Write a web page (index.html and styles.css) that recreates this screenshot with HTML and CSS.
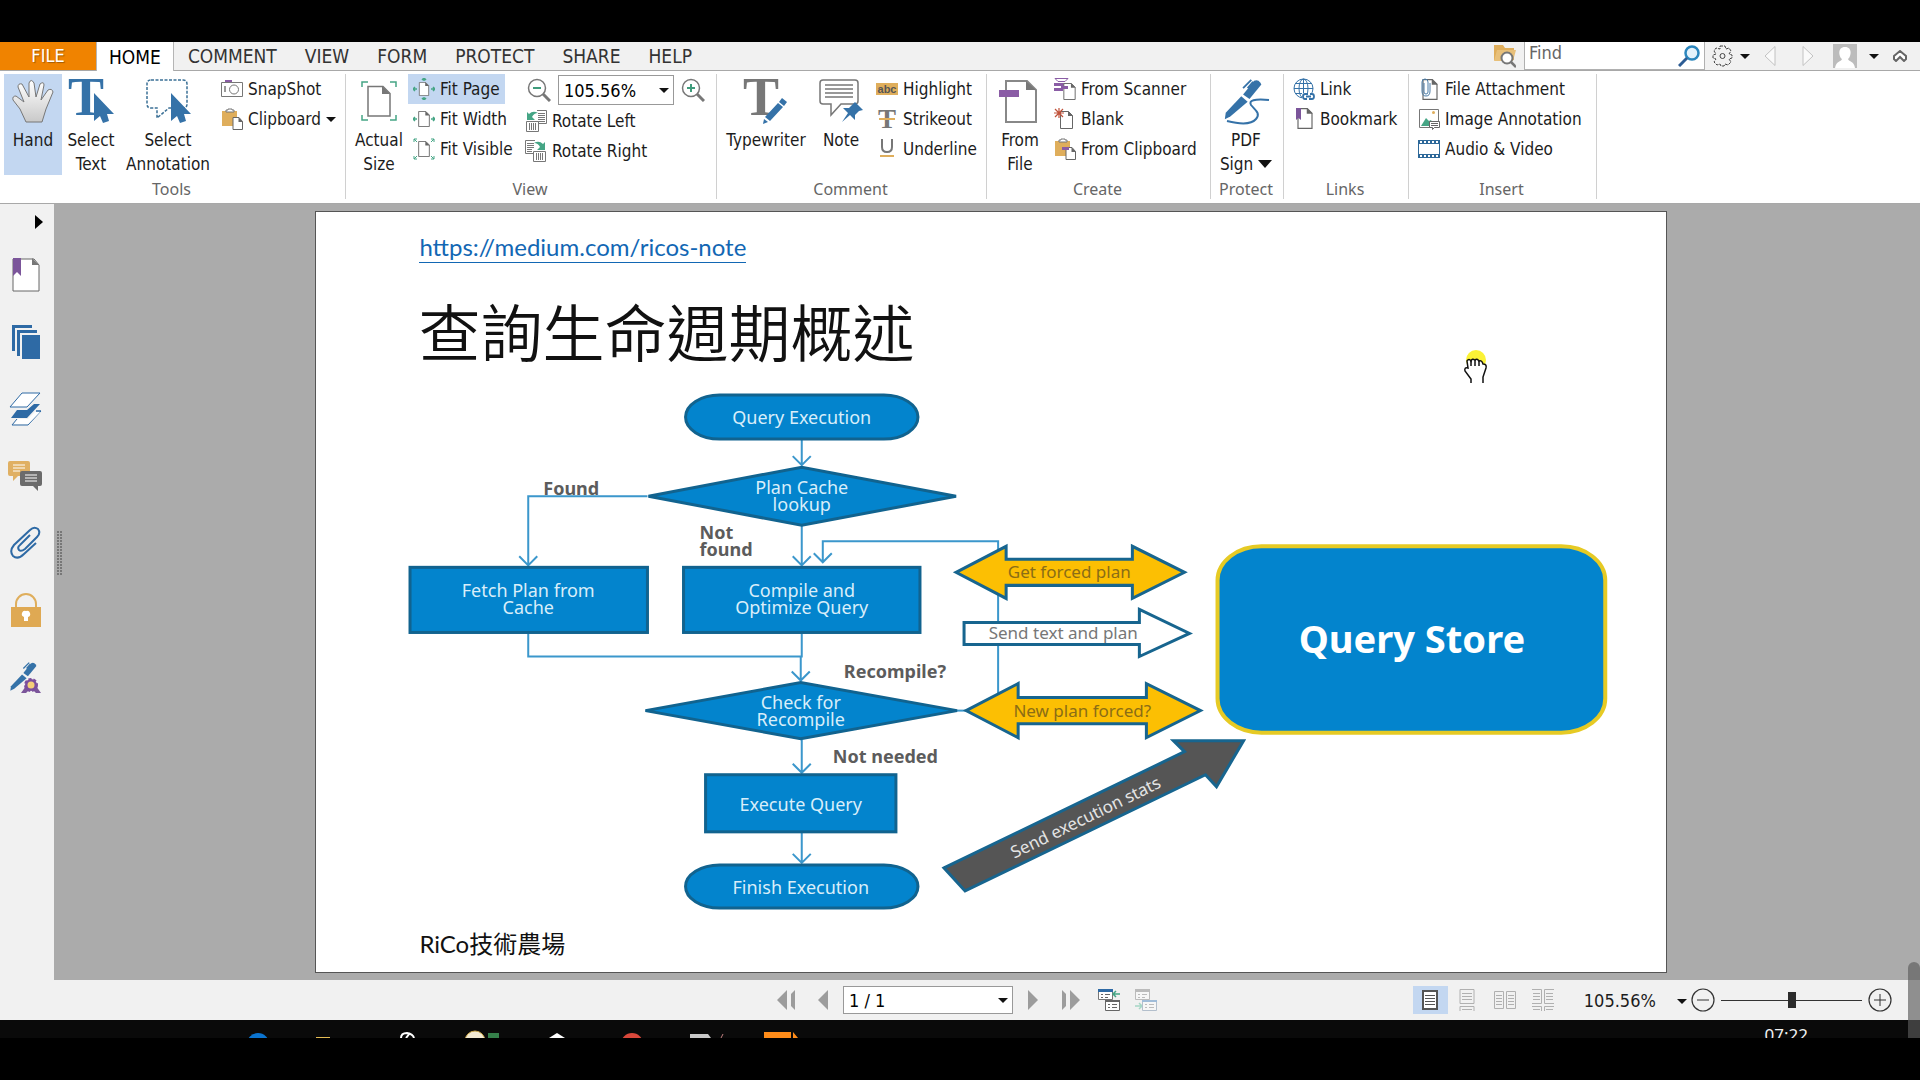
FILE: index.html
```
<!doctype html>
<html lang="zh-Hant">
  <head>
    <meta charset="UTF-8" />
    <meta name="viewport" content="width=device-width, initial-scale=1.0" />
    <title>PDF Reader</title>
    <link rel="stylesheet" href="styles.css" />
  </head>
  <body>
    <!-- shared icon shapes -->
    <svg class="defs" width="0" height="0" aria-hidden="true">
      <symbol id="cursor" viewBox="0 0 20 30">
        <path d="M0 0v28l6-5 3 7 6-2-2-7h7z" fill="#3572a8" />
      </symbol>
      <symbol id="sheet" viewBox="0 0 13 18">
        <path d="M.5.5h8l4 4v13H.5z" fill="#fff" stroke="#666" />
        <path d="M8 0v5h5z" fill="#666" />
      </symbol>
      <symbol id="clipboard" viewBox="0 0 22 22">
        <path d="M1 3h15v15H1z" fill="#dfae5c" />
        <path d="M5 4V2h2V1h4v1h2v2z" fill="#fff" stroke="#777" />
        <path d="M12 9.500h6l3.500 4v8H12z" fill="#fff" stroke="#666" />
        <path d="M17.500 9v5H22z" fill="#666" />
      </symbol>
      <symbol id="pen" viewBox="0 0 46 46">
        <path d="M30 7l4-5q4-2 7 2l1 2-13 16-7-5z" fill="#3572a8" />
        <path d="M20 19l7 6L8 41l-6 3 1-7z" fill="#3572a8" />
        <path d="M22 10l9-9M27 10l6-7" stroke="#3572a8" stroke-width="2" />
      </symbol>
      <symbol id="lines" viewBox="0 0 16 20">
        <path d="M1 1h14v18H1z" fill="#fff" stroke="currentColor" stroke-width="2" />
        <path d="M3 5.500h10M3 8.500h10M3 11.500h10M3 14.500h10" stroke="currentColor" />
      </symbol>
    </svg>

    <div class="window">
      <header class="tabbar">
        <nav class="tabs">
          <button class="tab file">FILE</button>
          <button class="tab active">HOME</button>
          <button class="tab">COMMENT</button>
          <button class="tab">VIEW</button>
          <button class="tab">FORM</button>
          <button class="tab">PROTECT</button>
          <button class="tab">SHARE</button>
          <button class="tab">HELP</button>
        </nav>
        <div class="tab-tools">
          <button aria-label="Search folder">
            <svg width="22" height="24" viewBox="0 0 22 24">
              <path d="M0 1h9l2 3h9v12H0z" fill="#dfae5c" />
              <path d="M3 6h19l-3 11H0z" fill="#e8c07a" />
              <circle cx="13" cy="14" r="5.500" fill="#fff" stroke="#777" stroke-width="2" />
              <path d="M17 18l5 5" stroke="#777" stroke-width="2.500" />
            </svg>
          </button>
          <div class="find">
            <input type="text" placeholder="Find" aria-label="Find" />
            <svg width="22" height="22" viewBox="0 0 22 22">
              <circle cx="14" cy="8" r="6.500" fill="#e4f2fb" stroke="#2b86bd" stroke-width="2.500" />
              <path d="M9 13l-8 8" stroke="#2c5c94" stroke-width="3" />
            </svg>
          </div>
          <button class="with-caret" aria-label="Options">
            <svg width="21" height="22" viewBox="0 0 21 22">
              <path d="M8 1h5l1 3 3-1 2 3-2 3 3 1v3l-3 1 2 3-3 3-3-1-1 2H9l-1-2-3 1-3-3 2-3-3-1v-3l3-1-2-3 2-3 4 1z" fill="none" stroke="#444" stroke-dasharray="3 1" />
              <circle cx="10.500" cy="11" r="2.500" fill="none" stroke="#444" />
            </svg>
            <span class="caret"></span>
          </button>
          <button class="step" aria-label="Previous">
            <svg width="12" height="22" viewBox="0 0 12 22"><path d="M11 1.500v19L1 11z" fill="#fafafa" stroke="#c2c2c2" /></svg>
          </button>
          <button class="step" aria-label="Next">
            <svg width="12" height="22" viewBox="0 0 12 22"><path d="M1 1.500v19L11 11z" fill="#fafafa" stroke="#c2c2c2" /></svg>
          </button>
          <button class="with-caret" aria-label="Account">
            <svg width="24" height="24" viewBox="0 0 24 24">
              <path d="M0 0h24v24H0z" fill="#bcbcbc" />
              <path d="M12 3c8 0 6 10 3 12 1 3 6 2 7 9H2c1-7 6-6 7-9C6 13 4 3 12 3z" fill="#fff" />
            </svg>
            <span class="caret"></span>
          </button>
          <button aria-label="Collapse ribbon">
            <svg width="14" height="12" viewBox="0 0 14 12">
              <path d="M1 6l6-5 6 5v3l-2 2-4-4-4 4-2-2z" fill="#fff" stroke="#666" stroke-width="2" />
            </svg>
          </button>
        </div>
      </header>

      <div class="ribbon">
        <section class="group tools">
          <div class="items">
            <button class="big selected">
              <svg width="44" height="46" viewBox="0 0 44 46">
                <defs>
                  <linearGradient id="skin" x2="0" y2="1"><stop stop-color="#fff" /><stop offset="1" stop-color="#c9c9c9" /></linearGradient>
                </defs>
                <path d="M15 44L9 31 2 22q-1-4 3-4l8 6L7 9q0-4 4-3l7 13L18 5q2-5 5 0l2 14 4-13q4-3 4 1l-3 15 7-10q4-2 5 2l-7 17-4 13z" fill="url(#skin)" stroke="#777" />
              </svg>
              <span>Hand</span>
            </button>
            <button class="big">
              <svg width="46" height="46" viewBox="0 0 46 46">
                <text x="0" y="37" class="glyph-t blue">T</text>
                <use href="#cursor" x="26" y="15" width="20" height="30" />
              </svg>
              <span>Select<br />Text</span>
            </button>
            <button class="big widest">
              <svg width="46" height="46" viewBox="0 0 46 46">
                <path d="M6 2h32q4 0 4 4v20q0 4-4 4H24L12 40V30H6q-4 0-4-4V6q0-4 4-4z" fill="none" stroke="#3b7096" stroke-width="1.500" stroke-dasharray="3 1.500" />
                <use href="#cursor" x="26" y="15" width="20" height="30" />
              </svg>
              <span>Select<br />Annotation</span>
            </button>
            <div class="column">
              <button class="small">
                <svg width="22" height="22" viewBox="0 0 22 22">
                  <path d="M4 5V2h7v3z" fill="#8a5ca5" />
                  <path d="M.5 4.500h21v14H.5z" fill="#fff" stroke="#777" />
                  <circle cx="13" cy="11.500" r="4.500" fill="none" stroke="#777" />
                  <path d="M4 8v6" stroke="#777" stroke-width="1.500" />
                </svg>
                SnapShot
              </button>
              <button class="small">
                <svg width="22" height="22"><use href="#clipboard" width="22" height="22" /></svg>
                Clipboard <span class="caret"></span>
              </button>
            </div>
          </div>
          <h2>Tools</h2>
        </section>

        <section class="group view">
          <div class="items">
            <button class="big">
              <svg width="46" height="46" viewBox="0 0 46 46">
                <path d="M6 9V4h6M34 4h6v5M6 37v5h6M34 42h6v-5" fill="none" stroke="#45a585" stroke-width="1.500" />
                <path d="M12 8.500h15l7 7V38H12z" fill="#fff" stroke="#777" stroke-width="1.500" />
                <path d="M26 8v8h8z" fill="#777" />
              </svg>
              <span>Actual<br />Size</span>
            </button>
            <div class="column fit">
              <button class="small selected">
                <svg width="22" height="22" viewBox="0 0 22 22">
                  <use href="#sheet" x="5" y="4" width="12" height="14" />
                  <path d="M0 11h4M2 9l-2 2 2 2M22 11h-4M20 9l2 2-2 2M11 0v3M9 2l2-2 2 2M11 22v-3M9 20l2 2 2-2" fill="none" stroke="#45a585" stroke-width="1.500" />
                </svg>
                Fit Page
              </button>
              <button class="small">
                <svg width="22" height="22" viewBox="0 0 22 22">
                  <use href="#sheet" x="5" y="3" width="12" height="16" />
                  <path d="M0 11h4M2 9l-2 2 2 2M22 11h-4M20 9l2 2-2 2" fill="none" stroke="#45a585" stroke-width="1.500" />
                </svg>
                Fit Width
              </button>
              <button class="small">
                <svg width="22" height="22" viewBox="0 0 22 22">
                  <use href="#sheet" x="5" y="3" width="12" height="16" />
                  <path d="M1 4V1h3M1 1l3 3M18 1h3v3M21 1l-3 3M1 18v3h3M1 21l3-3M18 21h3v-3M21 21l-3-3" fill="none" stroke="#45a585" />
                </svg>
                Fit Visible
              </button>
            </div>
            <div class="column">
              <div class="zoom-row">
                <button aria-label="Zoom out">
                  <svg width="24" height="24" viewBox="0 0 24 24">
                    <circle cx="10" cy="10" r="8.500" fill="#fff" stroke="#777" stroke-width="1.500" />
                    <path d="M16 16l7 7" stroke="#777" stroke-width="3" />
                    <path d="M6 10h8" stroke="#3f9c7c" stroke-width="2" />
                  </svg>
                </button>
                <div class="dropdown zoom-level">
                  <select aria-label="Zoom level"><option>105.56%</option></select>
                  <span class="caret"></span>
                </div>
                <button aria-label="Zoom in">
                  <svg width="24" height="24" viewBox="0 0 24 24">
                    <circle cx="10" cy="10" r="8.500" fill="#fff" stroke="#777" stroke-width="1.500" />
                    <path d="M16 16l7 7" stroke="#777" stroke-width="3" />
                    <path d="M6 10h8M10 6v8" stroke="#3f9c7c" stroke-width="2" />
                  </svg>
                </button>
              </div>
              <button class="small">
                <svg width="22" height="22" viewBox="0 0 22 22">
                  <path d="M12 .5h9.500v13H13" fill="#fff" stroke="#777" />
                  <path d="M13 3.500h7M13 5.500h7M13 7.500h7M13 9.500h7M13 11.500h7" stroke="#777" />
                  <path d="M2 2v8h8L7 7q2-4 6-4-5-3-9 1z" fill="#45a585" />
                  <path d="M1.500 11.500h12v10h-12z" fill="#fff" stroke="#777" />
                  <path d="M4.500 13v7M6.500 13v7M8.500 13v7M10.500 13v7" stroke="#777" />
                </svg>
                Rotate Left
              </button>
              <button class="small">
                <svg width="22" height="22" viewBox="0 0 22 22">
                  <path d="M10 .5H.5v13H9" fill="#fff" stroke="#777" />
                  <path d="M2 3.500h7M2 5.500h7M2 7.500h7M2 9.500h5M2 11.500h5" stroke="#777" />
                  <path d="M20 2v8h-8l3-3q-2-4-6-4 5-3 9 1z" fill="#45a585" />
                  <path d="M8.500 11.500h12v10h-12z" fill="#fff" stroke="#777" />
                  <path d="M11.500 13v7M13.500 13v7M15.500 13v7M17.500 13v7" stroke="#777" />
                </svg>
                Rotate Right
              </button>
            </div>
          </div>
          <h2>View</h2>
        </section>

        <section class="group comment">
          <div class="items">
            <button class="big widest">
              <svg width="46" height="46" viewBox="0 0 46 46">
                <text x="0" y="37" class="glyph-t gray">T</text>
                <path d="M39 20l5 4-3 4-5-4zM35 25l5 4-13 14-5-4z" fill="#3572a8" />
                <path d="M21 41l4 3-5 2z" fill="#3572a8" />
              </svg>
              <span>Typewriter</span>
            </button>
            <button class="big note">
              <svg width="46" height="46" viewBox="0 0 46 46">
                <path d="M5 2h32q3 0 3 3v18q0 3-3 3H23L13 37V26H5q-3 0-3-3V5q0-3 3-3z" fill="#fff" stroke="#777" stroke-width="1.500" />
                <path d="M7 7h28M7 11h28M7 15h28M7 19h28" stroke="#777" stroke-width="1.500" />
                <path d="M37 24l8 8-4 1-4 4v5l-5-5-8 7 6-9-5-5h6l4-4z" fill="#3572a8" />
              </svg>
              <span>Note</span>
            </button>
            <div class="column">
              <button class="small">
                <svg width="22" height="22" viewBox="0 0 22 22">
                  <path d="M0 5h22v12H0z" fill="#dfae5c" />
                  <text x="11" y="15" class="abc">abc</text>
                </svg>
                Highlight
              </button>
              <button class="small">
                <svg width="22" height="22" viewBox="0 0 22 22">
                  <text x="11" y="20" class="strike-t">T</text>
                  <path d="M3 11h16" stroke="#dfae5c" stroke-width="2" />
                </svg>
                Strikeout
              </button>
              <button class="small">
                <svg width="22" height="22" viewBox="0 0 22 22">
                  <path d="M6 1v8q0 5 5 5t5-5V1" fill="none" stroke="#777" stroke-width="2" />
                  <path d="M4 18h14" stroke="#dfae5c" stroke-width="2" />
                </svg>
                Underline
              </button>
            </div>
          </div>
          <h2>Comment</h2>
        </section>

        <section class="group create">
          <div class="items">
            <button class="big">
              <svg width="46" height="46" viewBox="0 0 46 46">
                <path d="M9 3h21l9 9v32H9z" fill="#fff" stroke="#888" stroke-width="2" />
                <path d="M29 3v9h10z" fill="#777" />
                <path d="M2 12h20v7H2z" fill="#8a5ca5" />
              </svg>
              <span>From<br />File</span>
            </button>
            <div class="column">
              <button class="small">
                <svg width="22" height="22" viewBox="0 0 22 22">
                  <path d="M1 .5h13l-3 3H4z" fill="#fff" stroke="#8a5ca5" />
                  <path d="M0 5h14v3H0zM0 10h9v3H0z" fill="#8a5ca5" />
                  <use href="#sheet" x="9" y="5" width="13" height="17" />
                  <path d="M7 8h7v3H7z" fill="#8a5ca5" />
                </svg>
                From Scanner
              </button>
              <button class="small">
                <svg width="22" height="22" viewBox="0 0 22 22">
                  <use href="#sheet" x="5" y="3" width="15" height="18" />
                  <path d="M0 5h10M5 0v10M1 1l8 8M9 1L1 9" stroke="#c0523a" stroke-width="1.200" />
                </svg>
                Blank
              </button>
              <button class="small">
                <svg width="22" height="22" viewBox="0 0 22 22">
                  <use href="#clipboard" width="22" height="22" />
                  <path d="M8 9h7v3H8z" fill="#8a5ca5" />
                </svg>
                From Clipboard
              </button>
            </div>
          </div>
          <h2>Create</h2>
        </section>

        <section class="group protect">
          <div class="items">
            <button class="big">
              <svg width="46" height="46" viewBox="0 0 46 46">
                <use href="#pen" width="42" height="44" />
                <path d="M46 22q-22-2-18 5c4 5 10 8 5 14-5 6-17 5-29 2" fill="none" stroke="#3572a8" stroke-width="2" />
              </svg>
              <span>PDF<br />Sign <i class="caret large"></i></span>
            </button>
          </div>
          <h2>Protect</h2>
        </section>

        <section class="group links">
          <div class="items">
            <div class="column">
              <button class="small">
                <svg width="22" height="22" viewBox="0 0 22 22">
                  <g fill="none" stroke="#3572a8">
                    <circle cx="10.500" cy="10.500" r="9.500" />
                    <ellipse cx="10.500" cy="10.500" rx="4.500" ry="9.500" />
                    <path d="M1 10.500h19M2 5.500h17M2 15.500h17M10.500 1v19" />
                  </g>
                  <path d="M9 15h13v7H9z" fill="#fff" />
                  <path d="M15 16h-3q-2 0-2 2.500t2 2.500h2M17 16h2q2 0 2 2.500T19 21h-3M13 18.500h5" fill="none" stroke="#3572a8" stroke-width="1.800" />
                </svg>
                Link
              </button>
              <button class="small">
                <svg width="22" height="22" viewBox="0 0 22 22">
                  <use href="#sheet" x="4" y="0" width="16" height="21" />
                  <path d="M3 0h5v12l-2.500-2L3 12z" fill="#7b559a" />
                </svg>
                Bookmark
              </button>
            </div>
          </div>
          <h2>Links</h2>
        </section>

        <section class="group insert">
          <div class="items">
            <div class="column">
              <button class="small">
                <svg width="22" height="22" viewBox="0 0 22 22">
                  <use href="#sheet" x="4" y="1" width="16" height="21" />
                  <path d="M6 5v9q0 2 2 2t2-2V4q0-3-3-3T4 4v9q0 5 4 5t4-5V5" fill="none" stroke="#4a7ba6" />
                </svg>
                File Attachment
              </button>
              <button class="small">
                <svg width="22" height="22" viewBox="0 0 22 22">
                  <path d="M1.500 1.500h19v18h-19z" fill="#fff" stroke="#777" />
                  <path d="M3 18l5-8 3 3 2-1 3 6z" fill="#45a585" />
                  <circle cx="15.500" cy="4.500" r="1.500" fill="#dfae5c" />
                  <path d="M11.500 13.500h10v6h-5l-2 2v-2h-3z" fill="#fff" stroke="#666" />
                  <path d="M13 15.500h7M13 17.500h7" stroke="#666" />
                </svg>
                Image Annotation
              </button>
              <button class="small">
                <svg width="22" height="22" viewBox="0 0 22 22">
                  <path d="M0 2h22v18H0z" fill="#2d6899" />
                  <path d="M1 6h20v10H1z" fill="#fff" />
                  <path d="M2 4h19M2 18h19" stroke="#fff" stroke-width="2" stroke-dasharray="2" />
                </svg>
                Audio &amp; Video
              </button>
            </div>
          </div>
          <h2>Insert</h2>
        </section>
      </div>

      <div class="workspace">
        <aside class="sidebar">
          <button class="expand" aria-label="Expand"><span></span></button>
          <button aria-label="Bookmarks">
            <svg width="34" height="34" viewBox="0 0 34 34">
              <path d="M5 1h21l5 6v26H5z" fill="#fff" stroke="#666" />
              <path d="M24 0v7h7z" fill="#777" />
              <path d="M5 0h8v18l-4-4-4 4z" fill="#7b559a" />
            </svg>
          </button>
          <button aria-label="Pages">
            <svg width="34" height="34" viewBox="0 0 34 34">
              <path d="M4 0h20v3H7v23H4zM9 5h20v3H12v23H9zM14 10h18v24H14z" fill="#2e6aa5" />
            </svg>
          </button>
          <button aria-label="Layers">
            <svg width="34" height="34" viewBox="0 0 34 34">
              <path d="M14 1h18L19 15H2z" fill="#fff" stroke="#2e6aa5" />
              <path d="M9 18h10l7-6h6L19 26H3z" fill="#2e6aa5" />
              <path d="M28 19h5L20 33H4l5-6M28 19h5" fill="none" stroke="#2e6aa5" />
              <path d="M27 20h5L20 32H6l4-5h10z" fill="#fff" />
            </svg>
          </button>
          <button aria-label="Comments">
            <svg width="34" height="34" viewBox="0 0 34 34">
              <path d="M2 2h18q2 0 2 2v13H10l-5 5v-5H2q-2 0-2-2V4q0-2 2-2z" fill="#e0b063" />
              <path d="M5 6h12M5 9h12M5 12h7" stroke="#fff" />
              <path d="M14 12h18q2 0 2 2v11q0 2-2 2h-2v5l-5-5H14q-2 0-2-2V14q0-2 2-2z" fill="#6b6b6b" />
              <path d="M17 16h12M17 19h12M17 22h12" stroke="#fff" />
            </svg>
          </button>
          <button aria-label="Attachments">
            <svg width="34" height="34" viewBox="0 0 34 34">
              <path d="M28 17L16 28q-6 6-11 2-4-5 1-11L22 4q4-4 8-1 3 4-1 8L17 23q-4 3-6 1-2-3 1-5l10-10" fill="none" stroke="#2e6aa5" stroke-width="2" />
            </svg>
          </button>
          <button aria-label="Security">
            <svg width="34" height="34" viewBox="0 0 34 34">
              <path d="M8 15v-4a10 10 0 0 1 20 0v4" fill="none" stroke="#dfae5c" stroke-width="2" />
              <path d="M3 14h30v20H3z" fill="#dfa953" />
              <path d="M18 18a3 3 0 0 1 2 6v4h-4v-4a3 3 0 0 1 2-6z" fill="#fff" />
            </svg>
          </button>
          <button aria-label="Signatures">
            <svg width="34" height="34" viewBox="0 0 34 34">
              <use href="#pen" x="1" y="2" width="30" height="30" />
              <path d="M18 26l-5 7h5l3-3M28 26l5 7h-5l-3-3" fill="#7b559a" />
              <circle cx="23" cy="25" r="6" fill="#7b4f9d" stroke="#7b4f9d" stroke-width="2" stroke-dasharray="3 2" />
              <circle cx="23" cy="25" r="3.500" fill="#f4cf78" />
            </svg>
          </button>
        </aside>
        <div class="splitter"><span></span></div>

        <main class="viewer">
          <article class="page">
            <a class="source" href="https://medium.com/ricos-note">https://medium.com/ricos-note</a>
            <h1>查詢生命週期概述</h1>
            <svg class="diagram" viewBox="400 385 1220 535" preserveAspectRatio="xMinYMin">
              <!-- connectors -->
              <g class="line">
                <path d="M801 441v25M792 457l9 9 9-9" />
                <path d="M647 497H528v69M519 557l9 9 9-9" />
                <path d="M801 526v40M792 557l9 9 9-9" />
                <path d="M997 700V542H822v21M813 554l9 9 9-9" />
                <path d="M528 634v23h273v-23M800 657v24M791 672l9 9 9-9" />
                <path d="M956 711h10" />
                <path d="M801 740v33M792 764l9 9 9-9" />
                <path d="M801 833v30M792 854l9 9 9-9" />
              </g>
              <!-- process nodes -->
              <g class="node">
                <rect x="685" y="396" width="232" height="44" rx="34" ry="22" />
                <path d="M648 497l153-29 154 29-154 29z" />
                <rect x="410" y="568" width="237" height="65" />
                <rect x="683" y="568" width="236" height="65" />
                <path d="M645 711l155-28 156 28-156 28z" />
                <rect x="705" y="775" width="190" height="57" />
                <rect x="685" y="865" width="232" height="43" rx="34" ry="22" />
              </g>
              <rect class="store" x="1216" y="547" width="387" height="186" rx="44" ry="34" />
              <!-- block arrows -->
              <path class="arrow gold" d="M955 573l50-26v13h126v-13l52 26-52 26v-13h-126v13z" />
              <path class="arrow white" d="M963 623h175v-13l50 24-50 23v-12H963z" />
              <path class="arrow gold" d="M965 711l52-27v14h128v-14l54 27-54 27v-14h-128v14z" />
              <path class="arrow dark" d="M943 868l240-116-11-11h70l-27 46-11-12-240 116z" />

              <g class="node-text">
                <text x="801" y="425">Query Execution</text>
                <text x="801" y="495">Plan Cache</text>
                <text x="801" y="512">lookup</text>
                <text x="528" y="598">Fetch Plan from</text>
                <text x="528" y="615">Cache</text>
                <text x="801" y="598">Compile and</text>
                <text x="801" y="615">Optimize Query</text>
                <text x="800" y="709">Check for</text>
                <text x="800" y="726">Recompile</text>
                <text x="800" y="811">Execute Query</text>
                <text x="800" y="894">Finish Execution</text>
              </g>
              <g class="edge-text">
                <text x="543" y="496">Found</text>
                <text x="699" y="540">Not</text>
                <text x="699" y="557">found</text>
                <text x="843" y="678">Recompile?</text>
                <text x="832" y="763">Not needed</text>
              </g>
              <text class="arrow-text on-gold" x="1068" y="579">Get forced plan</text>
              <text class="arrow-text" x="1062" y="640">Send text and plan</text>
              <text class="arrow-text on-gold" x="1081" y="717">New plan forced?</text>
              <text class="arrow-text on-dark" x="1087" y="823" transform="rotate(-26 1087 823)">Send execution stats</text>
              <text class="store-text" x="1410" y="654">Query Store</text>
            </svg>
            <footer>RiCo技術農場</footer>
            <div class="pointer">
              <svg width="26" height="36" viewBox="0 0 26 36">
                <circle cx="13" cy="11" r="10" fill="#fbf236" />
                <path d="M8 34v-4L2 22q-1-4 3-3l-1-7q2-3 4 0 1-3 4-1 2-2 4 1 3-1 4 3 4 0 3 4l-3 9v6" fill="#fff" stroke="#111" stroke-width="1.500" />
                <path d="M8 12v5M12 11v6M16 12v5" stroke="#111" stroke-width="1.500" />
              </svg>
            </div>
          </article>
        </main>
        <div class="scroll-thumb"></div>
      </div>

      <div class="statusbar">
        <div class="pager">
          <button aria-label="First page"><svg width="18" height="20" viewBox="0 0 18 20"><path d="M10 0v20L0 10zM18 0v20l-4-4V4z" fill="#9c9c9c" /></svg></button>
          <button aria-label="Previous page"><svg width="10" height="20" viewBox="0 0 10 20"><path d="M10 0v20L0 10z" fill="#9c9c9c" /></svg></button>
          <div class="dropdown page-number">
            <select aria-label="Page"><option>1 / 1</option></select>
            <span class="caret"></span>
          </div>
          <button aria-label="Next page"><svg width="10" height="20" viewBox="0 0 10 20"><path d="M0 0v20l10-10z" fill="#9c9c9c" /></svg></button>
          <button class="last" aria-label="Last page"><svg width="18" height="20" viewBox="0 0 18 20"><path d="M8 0v20l10-10zM0 0v20l4-4V4z" fill="#9c9c9c" /></svg></button>
          <button aria-label="Previous view">
            <svg width="22" height="22" viewBox="0 0 22 22">
              <path d="M.5.5h14v10H.5z" fill="#fff" stroke="#777" />
              <path d="M0 0h15v3H0z" fill="#2e6aa5" />
              <path d="M3 5.500h2M7 5.500h5M3 8.500h2M7 8.500h3" stroke="#666" />
              <path d="M22 5h-7M18 2l-3 3 3 3" fill="none" stroke="#45a585" stroke-width="1.500" />
              <path d="M7.500 11.500h14v10h-14z" fill="#fff" stroke="#666" />
              <path d="M7 11h15v2H7z" fill="#666" />
              <path d="M10 15.500h2M14 15.500h5M10 18.500h2M14 18.500h5" stroke="#666" />
            </svg>
          </button>
          <button aria-label="Next view">
            <svg width="22" height="22" viewBox="0 0 22 22">
              <path d="M.5.5h14v10H.5z" fill="#f6f6f6" stroke="#bbb" />
              <path d="M0 0h15v3H0z" fill="#bbb" />
              <path d="M3 5.500h2M7 5.500h5M3 8.500h2M7 8.500h3" stroke="#bbb" />
              <path d="M0 17h7M4 14l3 3-3 3" fill="none" stroke="#a5d6c5" stroke-width="1.500" />
              <path d="M7.500 11.500h14v10h-14z" fill="#f6f6f6" stroke="#b3bfcc" />
              <path d="M7 11h15v2H7z" fill="#a0bcd8" />
              <path d="M10 15.500h2M14 15.500h5M10 18.500h2M14 18.500h5" stroke="#bbb" />
            </svg>
          </button>
        </div>
        <div class="view-modes">
          <button class="mode selected" aria-label="Single page"><svg width="16" height="20"><use href="#lines" width="16" height="20" /></svg></button>
          <button class="mode" aria-label="Continuous">
            <svg width="16" height="22" viewBox="0 0 16 22"><path d="M1 .5h14v14H1zM1 22v-4.500h14V22M3 4.500h10M3 7.500h10M3 10.500h10M3 20.500h10" fill="none" stroke="currentColor" /></svg>
          </button>
          <button class="mode" aria-label="Facing">
            <svg width="22" height="18" viewBox="0 0 22 18"><path d="M.5.5h9v17h-9zM12.500.5h9v17h-9zM2 4.500h6M2 7.500h6M2 10.500h6M2 13.500h6M14 4.500h6M14 7.500h6M14 10.500h6M14 13.500h6" fill="none" stroke="currentColor" /></svg>
          </button>
          <button class="mode" aria-label="Continuous facing">
            <svg width="22" height="22" viewBox="0 0 22 22"><path d="M0 .5h9.500v14H0M22 .5h-9.500v14H22M0 17.500h9.500V22M22 17.500h-9.500V22M1 4.500h7M1 7.500h7M1 10.500h7M14 4.500h7M14 7.500h7M14 10.500h7M1 20.500h7M14 20.500h7" fill="none" stroke="currentColor" /></svg>
          </button>
          <button class="percent">105.56% <span class="caret"></span></button>
          <button class="round" aria-label="Zoom out"><svg width="24" height="24" viewBox="0 0 24 24"><circle cx="12" cy="12" r="11" fill="none" stroke="#333" stroke-width="1.200" /><path d="M6 12h12" stroke="#333" /></svg></button>
          <input type="range" min="0" max="100" value="50" aria-label="Zoom" />
          <button class="round" aria-label="Zoom in"><svg width="24" height="24" viewBox="0 0 24 24"><circle cx="12" cy="12" r="11" fill="none" stroke="#333" stroke-width="1.200" /><path d="M6 12h12M12 6v12" stroke="#333" /></svg></button>
        </div>
      </div>

      <div class="taskbar">
        <svg width="560" height="18" viewBox="246 1020 560 18">
          <circle cx="258" cy="1044" r="11" fill="#0b74d0" />
          <path d="M316 1037h14v1h-14z" fill="#e5bd54" />
          <path d="M401 1038q0-5 6-5 6 1 7 5M406 1038l4-5" fill="none" stroke="#fff" stroke-width="2" />
          <circle cx="475" cy="1041" r="10" fill="#f3ead2" stroke="#c9a548" />
          <path d="M488 1033h11v5h-11z" fill="#35804a" />
          <path d="M557 1033l8 5h-16z" fill="#fff" />
          <circle cx="632" cy="1044" r="11" fill="#d9483b" />
          <path d="M690 1034h18l3 4h-21z" fill="#c9c9c9" />
          <path d="M721 1038l2-4" stroke="#c08080" />
          <path d="M764 1032h27v6h-27zM793 1032l5 6h-5z" fill="#ff8c19" />
        </svg>
        <time>07:22</time>
      </div>
    </div>
  </body>
</html>
```

FILE: styles.css
```
* {
  margin: 0;
  padding: 0;
  box-sizing: border-box;
}

body {
  height: 100vh;
  padding: 42px 0;
  background: #000;
  font-family: "DejaVu Sans Condensed", "DejaVu Sans", sans-serif;
  font-size: 17px;
  color: #1c1c1c;
  overflow: hidden;
}

button {
  border: 0;
  background: none;
  font: inherit;
  color: inherit;
}

svg {
  display: block;
  flex-shrink: 0;
}

.defs {
  position: absolute;
}

.window {
  height: 100%;
  display: flex;
  flex-direction: column;
}

.caret {
  display: inline-block;
  border: 5px solid transparent;
  border-top-color: #111;
  border-bottom: 0;
}

.caret.large {
  border-width: 8px 7px 0;
  vertical-align: 2px;
}

.selected {
  background: #c3d7f1;
}

/* Tab bar */
.tabbar {
  height: 29px;
  display: flex;
  justify-content: space-between;
  background: #f1f1f1;
  border-bottom: 1px solid #a8a8a8;
}

.tabs {
  display: flex;
}

.tab {
  height: 28px;
  padding: 0 14px;
  font-size: 19px;
  line-height: 28px;
  color: #333;
}

.tab.file {
  width: 96px;
  background: #f08300;
  color: #fff;
  font-size: 18px;
  text-shadow: 1px 1px 1px #a55a00;
}

.tab.active {
  height: 29px;
  padding: 0 12px;
  background: #fff;
  border: 1px solid #b5b5b5;
  border-width: 0 1px;
  color: #000;
}

.tab-tools {
  display: flex;
  align-items: center;
  padding-right: 13px;
}

.find {
  width: 181px;
  height: 28px;
  margin: 0 7px 0 8px;
  padding-right: 4px;
  display: flex;
  align-items: center;
  background: #fff;
  border: 1px solid #b0b0b0;
  border-top: 0;
}

.find input {
  width: 100%;
  padding: 0 4px 6px;
  border: 0;
  font: inherit;
  font-size: 18px;
}

.find input::placeholder {
  color: #666;
}

.with-caret {
  display: flex;
  align-items: center;
  gap: 7px;
}

.with-caret .caret {
  margin-right: 14px;
}

.step {
  margin-right: 26px;
}

.step + .with-caret {
  gap: 12px;
  margin-left: -7px;
}

/* Ribbon */
.ribbon {
  height: 133px;
  display: flex;
  padding: 3px 0 4px;
  background: #fff;
  border-bottom: 1px solid #a8a8a8;
}

.group {
  flex-shrink: 0;
  display: flex;
  flex-direction: column;
  padding-left: 4px;
  border-right: 1px solid #d0d0d0;
}

.group h2 {
  margin-top: auto;
  padding-right: 6px;
  font-family: "Noto Sans", sans-serif;
  font-size: 16px;
  font-weight: 400;
  line-height: 20px;
  text-align: center;
  color: #666;
}

.tools { width: 346px; }
.view { width: 371px; }
.comment { width: 270px; }
.create { width: 224px; }
.protect { width: 73px; }
.links { width: 125px; }
.insert { width: 188px; }

.items {
  display: flex;
}

.big {
  width: 58px;
  height: 101px;
  padding-top: 4px;
  display: flex;
  flex-direction: column;
  align-items: center;
  gap: 4px;
  line-height: 24px;
}

.big svg {
  overflow: visible;
}

.big.widest {
  width: 96px;
}

.comment .big.widest {
  width: 90px;
}

.big.note {
  width: 60px;
}

.protect .big {
  width: 62px;
}

.big span {
  white-space: nowrap;
}

.column {
  display: flex;
  flex-direction: column;
  align-items: flex-start;
}

.column.fit {
  width: 112px;
}

.small {
  height: 30px;
  padding: 0 5px;
  display: flex;
  align-items: center;
  gap: 5px;
  white-space: nowrap;
}

.zoom-row {
  height: 32px;
  padding-left: 7px;
  display: flex;
  align-items: center;
  gap: 7px;
}

.dropdown {
  position: relative;
  display: flex;
  align-items: center;
}

.dropdown select {
  width: 100%;
  height: 30px;
  padding: 0 5px;
  appearance: none;
  background: #fff;
  border: 1px solid #999;
  border-radius: 0;
  font: inherit;
  font-size: 18px;
  color: #000;
}

.dropdown .caret {
  position: absolute;
  right: 5px;
  pointer-events: none;
}

.zoom-level {
  width: 116px;
}

.glyph-t {
  font: bold 54px "Liberation Serif", serif;
}

.blue {
  fill: #3572a8;
}

.gray {
  fill: #777;
}

.abc {
  font: bold 11px "Liberation Sans", sans-serif;
  text-anchor: middle;
  fill: #555;
}

.strike-t {
  font: bold 27px "Liberation Serif", serif;
  text-anchor: middle;
  fill: #777;
}

/* Workspace */
.workspace {
  position: relative;
  flex: 1;
  min-height: 0;
  display: flex;
  background: #ababab;
}

.sidebar {
  width: 54px;
  padding: 11px 10px 0 8px;
  display: flex;
  flex-direction: column;
  gap: 33px;
  background: #f1f1f1;
}

.expand {
  height: 14px;
  padding-left: 27px;
  margin-bottom: -4px;
}

.expand span {
  display: block;
  width: 8px;
  border: 7px solid transparent;
  border-left: 8px solid #000;
  border-right: 0;
}

.splitter {
  width: 8px;
  display: flex;
  align-items: center;
}

.splitter span {
  width: 6px;
  height: 45px;
  margin: 0 0 78px 3px;
  background: radial-gradient(circle at 1px 1px, #777 1px, transparent 1px) 0 0 / 3px 3px;
}

.viewer {
  flex: 1;
  padding: 7px 0;
  display: flex;
  justify-content: center;
}

.page {
  position: relative;
  height: 100%;
  aspect-ratio: 1353 / 763;
  display: flex;
  flex-direction: column;
  align-items: flex-start;
  background: #fff;
  border: 1px solid #555;
}

.source {
  margin: 20px 0 0 103px;
  font-family: Lato, sans-serif;
  font-size: 24px;
  line-height: 30px;
  color: #1267b4;
  text-decoration: none;
  border-bottom: 1px solid #1267b4;
}

.page h1 {
  margin: 25px 0 12px 102px;
  font-family: "Noto Sans CJK TC", sans-serif;
  font-size: 62px;
  font-weight: 350;
  line-height: 84px;
  color: #111;
}

.diagram {
  flex: 1;
  min-height: 0;
  width: 91%;
  margin-left: 84px;
}

.page footer {
  margin-left: 103px;
  padding-bottom: 4px;
  font-family: Lato, "Noto Sans CJK TC", sans-serif;
  font-size: 24px;
  font-weight: 400;
  line-height: 48px;
  color: #111;
}

.pointer {
  position: absolute;
  top: 18%;
  left: 85%;
}

.scroll-thumb {
  position: absolute;
  right: 0;
  bottom: -58px;
  width: 12px;
  height: 76px;
  border-radius: 6px 6px 0 0;
  background: rgba(90, 90, 90, 0.65);
  z-index: 1;
}

/* Diagram */
.line {
  fill: none;
  stroke: #3b97cc;
  stroke-width: 2;
}

.node {
  fill: #0384cd;
  stroke: #11638f;
  stroke-width: 3;
}

.store {
  fill: #0384cd;
  stroke: #e6ca24;
  stroke-width: 4;
}

.arrow {
  stroke: #17658f;
  stroke-width: 3;
}

.gold { fill: #fcbf03; }
.white { fill: #fff; }
.dark { fill: #555; }

.diagram text {
  font-family: "Noto Sans", sans-serif;
  font-size: 18px;
}

.node-text {
  fill: #d9eefa;
  text-anchor: middle;
}

.edge-text {
  fill: #5c5c5c;
  font-weight: 700;
}

.diagram .arrow-text {
  font-size: 17px;
  fill: #777;
  text-anchor: middle;
}

.diagram .on-gold { fill: #8a6d16; }
.diagram .on-dark { fill: #e4e4e4; }

.diagram .store-text {
  font-size: 38px;
  font-weight: 700;
  fill: #fff;
  text-anchor: middle;
}

/* Status bar */
.statusbar {
  height: 40px;
  padding: 0 28px 0 42px;
  display: grid;
  grid-template-columns: 1fr auto 1fr;
  align-items: center;
  background: #f1f1f1;
}

.pager {
  grid-column: 2;
  display: flex;
  align-items: center;
  gap: 15px;
}

.pager button:first-child {
  margin-right: 8px;
}

.pager .last {
  margin: 0 3px 0 9px;
}

.page-number {
  width: 170px;
}

.page-number select {
  height: 28px;
}

.view-modes {
  justify-self: end;
  display: flex;
  align-items: center;
}

.mode {
  width: 38px;
  height: 28px;
  display: flex;
  align-items: center;
  justify-content: center;
  color: #b0b0b0;
}

.mode.selected {
  width: 35px;
  color: #555;
}

.percent {
  margin-left: 22px;
  padding-right: 4px;
  font-size: 18px;
}

.percent .caret {
  margin-left: 16px;
  vertical-align: 3px;
}

.view-modes input {
  width: 141px;
  height: 20px;
  margin: 0 6px;
  appearance: none;
  background: linear-gradient(#333, #333) center / 100% 1px no-repeat;
}

.view-modes input::-webkit-slider-thumb {
  appearance: none;
  width: 8px;
  height: 16px;
  background: #2b2b2b;
}

/* Taskbar */
.taskbar {
  height: 18px;
  padding: 0 112px 0 246px;
  display: flex;
  justify-content: space-between;
  background: #0a0a0a;
  overflow: hidden;
}

.taskbar time {
  padding-top: 5px;
  font-family: "Noto Sans", sans-serif;
  font-size: 17px;
  line-height: 20px;
  color: #f2f2f2;
}
```
